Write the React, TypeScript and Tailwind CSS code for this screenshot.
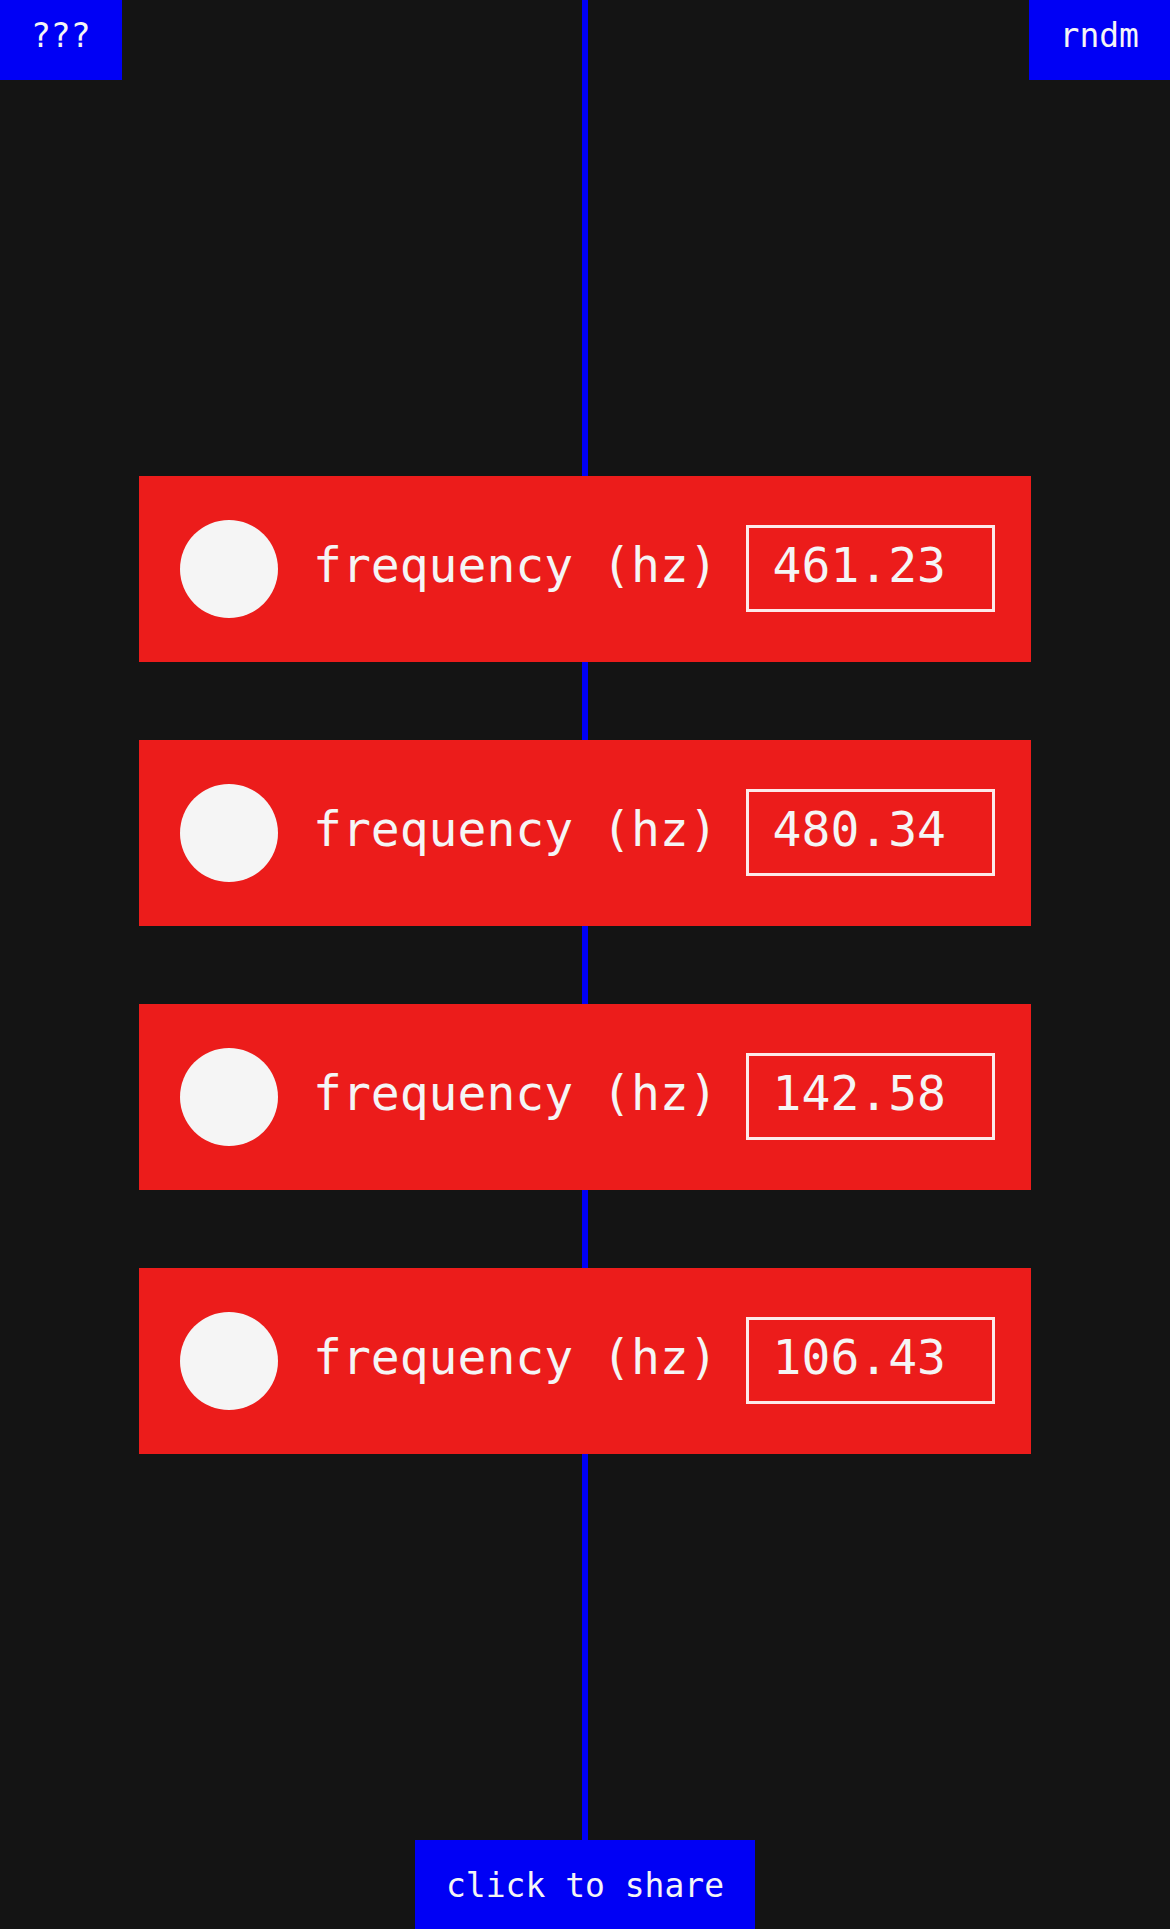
import { useState } from "react";

const initialFrequencies = ["461.23", "480.34", "142.58", "106.43"];

const cornerButton =
  "flex h-20 items-center bg-[#0000f5] px-[31px] pb-2 text-[33px] leading-10";

function Oscillator({
  index,
  value,
  onChange,
}: {
  index: number;
  value: string;
  onChange: (value: string) => void;
}) {
  const id = `frequency-${index}`;
  return (
    <section className="flex h-[186px] items-center bg-[#ec1c1b] pr-9 pl-[41px] text-5xl">
      <button
        type="button"
        aria-label={`toggle oscillator ${index + 1}`}
        className="size-[98px] shrink-0 rounded-full bg-[#f5f5f5]"
      />
      <label htmlFor={id} className="ml-[35px] pb-[7px] whitespace-nowrap">
        frequency (hz)
      </label>
      <input
        id={id}
        type="text"
        inputMode="decimal"
        value={value}
        onChange={(e) => onChange(e.target.value)}
        className="ml-7 h-[87px] min-w-0 flex-1 rounded-none border-3 border-[#fdeaea] bg-transparent px-6 pb-[7px] outline-none"
      />
    </section>
  );
}

export default function App() {
  const [frequencies, setFrequencies] = useState(initialFrequencies);

  const update = (index: number, value: string) =>
    setFrequencies((prev) => prev.map((f, i) => (i === index ? value : f)));

  const randomize = () =>
    setFrequencies((prev) => prev.map(() => (80 + Math.random() * 420).toFixed(2)));

  return (
    <div className="relative isolate grid min-h-screen grid-rows-[1fr_auto_1fr] bg-[#141414] font-['DejaVu_Sans_Mono',monospace] text-[#f5f5f5]">
      <div
        aria-hidden="true"
        className="absolute inset-y-0 left-1/2 -z-10 w-1.5 -translate-x-1/2 bg-[#0000f5]"
      />
      <header className="flex items-start justify-between">
        <button type="button" className={cornerButton}>
          ???
        </button>
        <button type="button" onClick={randomize} className={cornerButton}>
          rndm
        </button>
      </header>
      <main className="mx-auto flex w-full max-w-[892px] flex-col gap-[78px]">
        {frequencies.map((value, i) => (
          <Oscillator key={i} index={i} value={value} onChange={(v) => update(i, v)} />
        ))}
      </main>
      <footer className="flex items-end justify-center">
        <button
          type="button"
          className="h-[89px] bg-[#0000f5] px-[31px] pt-0.5 text-[33px] leading-10"
        >
          click to share
        </button>
      </footer>
    </div>
  );
}
